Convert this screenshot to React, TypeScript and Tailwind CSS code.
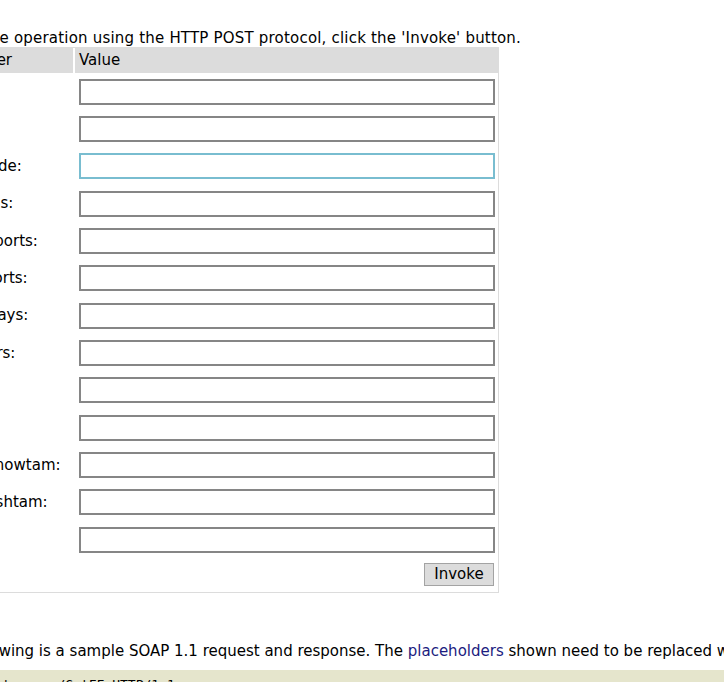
import { useState } from 'react'

const params = [
  'lat:',
  'lon:',
  'regionCode:',
  'elevations:',
  'originAirports:',
  'destAirports:',
  'validityDays:',
  'controllers:',
  'from:',
  'to:',
  'includeSnowtam:',
  'includeAshtam:',
  'icao:',
]

const App = () => {
  const [focused, setFocused] = useState(2)

  return (
    <div className="w-[724px] h-[682px] overflow-hidden bg-white text-black text-[15px] font-['DejaVu_Sans',Verdana,sans-serif]">
      <div className="ml-[-72px] w-[1200px] pt-[29px]">
        <p className="leading-[18px] tracking-[0.2px] whitespace-nowrap">
          To test the operation using the HTTP POST protocol, click the 'Invoke' button.
        </p>

        {/* formulario */}
        <form className="w-[571px] border border-[#dcdcdc]" onSubmit={(e) => e.preventDefault()}>
          <div className="grid grid-cols-[146px_1fr]">
            <div className="h-[25px] bg-[#dcdcdc] border-r-2 border-white pl-[5px] flex items-center">
              Parameter
            </div>
            <div className="h-[25px] bg-[#dcdcdc] pl-[4px] flex items-center">Value</div>

            {params.map((p, i) => (
              <div key={p} className="contents">
                <div className="h-[37.33px] pl-[2px] flex items-center whitespace-nowrap">{p}</div>
                <div className="h-[37.33px] pl-[4px] flex items-center">
                  <input
                    type="text"
                    onFocus={() => setFocused(i)}
                    className={
                      i === focused
                        ? 'w-[416px] h-[26px] border-2 border-[#79bdd0] outline-none bg-white px-1'
                        : 'w-[416px] h-[26px] border-2 border-[#868686] outline-none bg-white px-1'
                    }
                  />
                </div>
              </div>
            ))}

            <div className="h-[34px]" />
            <div className="h-[34px] flex items-start justify-end pt-[5px] pr-[4px]">
              <button
                type="submit"
                className="w-[70px] h-[23px] bg-[#dcdcdc] border border-[#a3a3a3] leading-none"
              >
                Invoke
              </button>
            </div>
          </div>
        </form>

        <p className="mt-[49px] ml-[6px] leading-[18px] whitespace-nowrap">
          The following is a sample SOAP 1.1 request and response. The{' '}
          <span className="text-[#1c1c80]">placeholders</span> shown need to be replaced with actual values.
        </p>

        <pre className="mt-[10px] bg-[#e5e5cc] pl-[12px] pt-[5px] pb-4 text-[13px] font-['DejaVu_Sans_Mono',monospace]">
          {'POST /Nota.asmx/GetFF HTTP/1.1\nHost: localhost'}
        </pre>
      </div>
    </div>
  )
}

export default App
